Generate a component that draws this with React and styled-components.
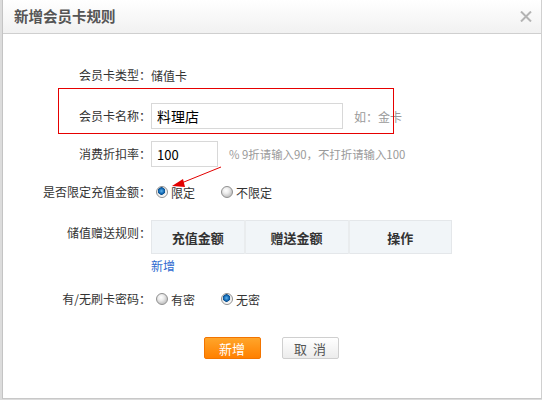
import React from 'react'
import styled, {createGlobalStyle} from 'styled-components'

const GlobalStyle = createGlobalStyle`
  html, body {
    margin: 0;
    padding: 0;
    background: #fff;
  }
  body {
    font-family: "Noto Sans CJK SC", "Liberation Sans", sans-serif;
    font-size: 12px;
    color: #333;
  }
`

const Radio = ({checked, label}) => (
    <Option>
        <RadioDot checked={checked} />
        <span>{label}</span>
    </Option>
)

const App = () => {
    return (
        <Page>
            <GlobalStyle />
            <Dialog>
                <TitleBar>
                    <Title>新增会员卡规则</Title>
                    <Close aria-label="close">
                        <svg width="12" height="11" viewBox="0 0 12 11">
                            <path d="M1 0.5 L11 10.5 M11 0.5 L1 10.5" stroke="#b4b4b4" strokeWidth="2" fill="none" />
                        </svg>
                    </Close>
                </TitleBar>

                <Form>
                    <Row $top={28}>
                        <Label>会员卡类型：</Label>
                        <Value>储值卡</Value>
                    </Row>

                    <Row $top={15}>
                        <Label>会员卡名称：</Label>
                        <TextInput $width={192} defaultValue="料理店" />
                        <Hint $gap={11}>如：金卡</Hint>
                    </Row>

                    <Row $top={12}>
                        <Label>消费折扣率：</Label>
                        <TextInput $width={67} $size={13} defaultValue="100" />
                        <Hint $gap={11} $size={11.4}>% 9折请输入90，不打折请输入100</Hint>
                    </Row>

                    <Row $top={12}>
                        <Label>是否限定充值金额：</Label>
                        <Radio checked label="限定" />
                        <Radio label="不限定" />
                    </Row>

                    <Row $top={15} $align="flex-start" $height={34}>
                        <Label>储值赠送规则：</Label>
                        <RuleTable>
                            <colgroup>
                                <col style={{width: 93}} />
                                <col style={{width: 104}} />
                                <col />
                            </colgroup>
                            <thead>
                                <tr>
                                    <HeadCell>充值金额</HeadCell>
                                    <HeadCell>赠送金额</HeadCell>
                                    <HeadCell>操作</HeadCell>
                                </tr>
                            </thead>
                        </RuleTable>
                    </Row>

                    <Row $top={3} $height={18}>
                        <Label />
                        <AddLink href="#">新增</AddLink>
                    </Row>

                    <Row $top={11}>
                        <Label>有/无刷卡密码：</Label>
                        <Radio label="有密" />
                        <Radio checked label="无密" />
                    </Row>

                    <Actions>
                        <Button $primary>新增</Button>
                        <Button>取&nbsp;&nbsp;消</Button>
                    </Actions>
                </Form>
            </Dialog>

            <Highlight />
            <Arrow width="60" height="30" viewBox="0 0 60 30">
                <path d="M52 1 L10 18" stroke="#e30000" strokeWidth="1" fill="none" />
                <path d="M3 20 L14 13 L16 21 Z" fill="#e30000" />
            </Arrow>
        </Page>
    )
}

const Page = styled.div`
  position: relative;
  width: 542px;
  height: 400px;
  background: #dcdcdc;
  padding-left: 2px;
  box-sizing: border-box;
  overflow: hidden;
`

const Dialog = styled.div`
  height: 399px;
  background: #fff;
  border-left: 1px solid #c4c4c4;
  border-right: 1px solid #d0d0d0;
  border-bottom: 1px solid #c8c8c8;
  box-sizing: border-box;
  display: flex;
  flex-direction: column;
`

const TitleBar = styled.div`
  height: 34px;
  box-sizing: border-box;
  display: flex;
  align-items: center;
  justify-content: space-between;
  padding: 0 9px 2px 11px;
  background: linear-gradient(#ffffff, #f1f1f1);
  border-bottom: 1px solid #cfcfcf;
`

const Title = styled.div`
  font-size: 14.5px;
  font-weight: bold;
  color: #555;
`

const Close = styled.span`
  display: flex;
  align-items: center;
  margin-top: 1px;
`

const Form = styled.div`
  display: flex;
  flex-direction: column;
`

const Row = styled.div`
  display: flex;
  align-items: ${p => p.$align || 'center'};
  height: ${p => p.$height || 26}px;
  margin-top: ${p => p.$top}px;
`

const Label = styled.label`
  width: 148px;
  flex-shrink: 0;
  text-align: right;
  line-height: 26px;
  color: #333;
  white-space: nowrap;
`

const Value = styled.span`
  color: #333;
`

const TextInput = styled.input`
  width: ${p => p.$width}px;
  height: 26px;
  box-sizing: border-box;
  border: 1px solid #d8d8d8;
  padding: 0 5px;
  font-family: "Noto Sans CJK SC", "Liberation Sans", sans-serif;
  font-size: ${p => p.$size || 14}px;
  color: #000;
  outline: none;
`

const Hint = styled.span`
  margin-left: ${p => p.$gap}px;
  font-size: ${p => p.$size || 12}px;
  color: #9a9a9a;
  white-space: nowrap;
`

const Option = styled.span`
  display: inline-flex;
  align-items: center;
  width: 65px;
  gap: 3px;
  margin-left: 5px;
  & + & {
    margin-left: 0;
  }
`

const RadioDot = styled.span`
  width: 12px;
  height: 12px;
  border-radius: 50%;
  box-sizing: border-box;
  border: 1px solid #8f8f8f;
  background: ${p => p.checked
    ? 'radial-gradient(circle at 45% 40%, #5fb4ec 0, #1469b4 2.5px, #0b4f8c 3.5px, #e8e8e8 4px, #ffffff 6px)'
    : 'radial-gradient(circle at 40% 35%, #ffffff 0, #ececec 3px, #c8c8c8 6px)'};
`

const RuleTable = styled.table`
  width: 301px;
  height: 34px;
  table-layout: fixed;
  border-collapse: collapse;
  border: 1px solid #e4e7ea;
`

const HeadCell = styled.th`
  background: #f1f5f8;
  border-right: 2px solid #e9ecee;
  font-size: 13px;
  font-weight: bold;
  color: #333;
  padding: 0;
  &:last-child {
    border-right: none;
  }
`

const AddLink = styled.a`
  color: #2f6ad0;
  text-decoration: none;
  line-height: 18px;
`

const Actions = styled.div`
  display: flex;
  justify-content: center;
  gap: 21px;
  margin-top: 25px;
  padding-right: 2px;
`

const Button = styled.button`
  width: 57px;
  height: 22px;
  box-sizing: border-box;
  border-radius: 2px;
  padding: 0;
  font-family: "Noto Sans CJK SC", "Liberation Sans", sans-serif;
  font-size: 13px;
  cursor: pointer;
  border: 1px solid ${p => (p.$primary ? '#f27400' : '#cfcfcf')};
  color: ${p => (p.$primary ? '#fff' : '#555')};
  background: ${p => (p.$primary
    ? 'linear-gradient(#ffa52a, #ff8000)'
    : 'linear-gradient(#ffffff, #ececec)')};
`

const Highlight = styled.div`
  position: absolute;
  left: 58px;
  top: 88px;
  width: 336px;
  height: 46px;
  box-sizing: border-box;
  border: 1px solid #e60000;
  pointer-events: none;
`

const Arrow = styled.svg`
  position: absolute;
  left: 169px;
  top: 166px;
  pointer-events: none;
`

export default App
